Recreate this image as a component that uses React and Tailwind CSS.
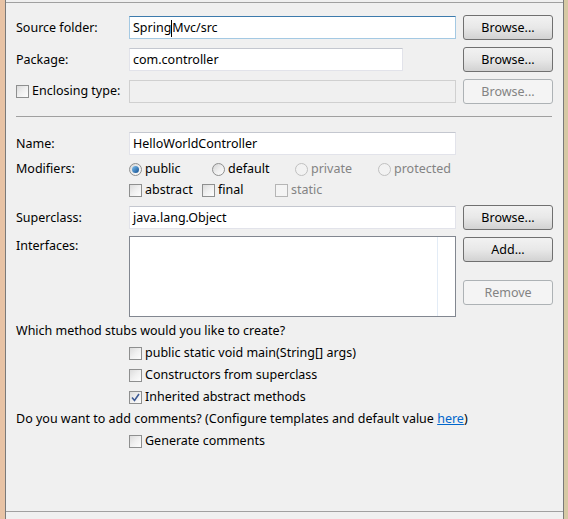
import React from 'react';

const font = { fontFamily: '"Noto Sans", "Liberation Sans", sans-serif' };

const Check = ({ checked, disabled }) => (
    <span
        className={`w-[13px] h-[13px] border flex items-center justify-center shrink-0 ${
            disabled
                ? 'border-[#b5b5b5] bg-[#f4f4f4]'
                : 'border-[#8e8f8f] bg-gradient-to-br from-[#dcdcdc] via-[#f0f0f0] to-[#fdfdfd]'
        }`}
    >
        {checked && (
            <svg width="9" height="9" viewBox="0 0 9 9">
                <path d="M1 4.5 L3.5 7.5 L8 1" fill="none" stroke="#3d5a94" strokeWidth="1.6" />
            </svg>
        )}
    </span>
);

const Radio = ({ checked, disabled }) => (
    <span
        className={`w-[13px] h-[13px] rounded-full border flex items-center justify-center shrink-0 ${
            disabled
                ? 'border-[#c0c0c0] bg-[#f2f2f2]'
                : 'border-[#8e8f8f] bg-gradient-to-br from-[#d4d4d4] via-[#eeeeee] to-[#fcfcfc]'
        }`}
    >
        {checked && <span className="w-[7px] h-[7px] rounded-full bg-gradient-to-br from-[#7fc3f2] to-[#0d4d8f]" />}
    </span>
);

const Button = ({ children, disabled }) => (
    <div
        className={`w-[90px] h-[25px] pt-px rounded-[3px] border flex items-center justify-center text-[12.5px] ${
            disabled
                ? 'border-[#adb2b5] bg-[#f4f4f4] text-[#838383]'
                : 'border-[#707070] bg-gradient-to-b from-[#f2f2f2] via-[#e8e8e8] to-[#d2d2d2] text-black'
        }`}
    >
        {children}
    </div>
);

const Field = ({ children, width = 'w-[327px]', focused, disabled }) => (
    <div
        className={`${width} h-[23px] pt-px border flex items-center pl-[3px] text-[12.5px] ${
            focused
                ? 'border-[#a4c9e3] border-t-[#3d7bad] bg-white'
                : disabled
                ? 'border-[#d0d0d0] bg-[#f0f0f0]'
                : 'border-[#e2e3ea] border-t-[#c4c7cf] bg-white'
        }`}
    >
        {children}
    </div>
);

const Row = ({ label, children, className = '' }) => (
    <div className={`flex items-center h-[25px] pl-[10px] ${className}`}>
        <div className="w-[113px] shrink-0 pt-px">{label}</div>
        {children}
    </div>
);

const Opt = ({ children, className = '' }) => (
    <div className={`flex items-center gap-[3px] ${className}`}>{children}</div>
);

export default function App() {
    return (
        <div className="w-[568px] h-[519px] flex text-black bg-[#f0f0f0]" style={font}>
            <div className="w-[5px] bg-[#e8c3a5]" />
            <div className="flex-1 flex flex-col border-l border-r border-[#7a7a7a]">
                <div className="h-[2px] bg-[#f0f0f0]" />
                <div className="flex-1 flex flex-col border-t border-[#a0a0a0] text-[12.5px]">
                    <Row label="Source folder:" className="mt-[12px]">
                        <Field focused>
                            Spring<span className="inline-block w-px h-[17px] bg-black" />Mvc/src
                        </Field>
                        <div className="ml-[7px]"><Button>Browse...</Button></div>
                    </Row>
                    <Row label="Package:" className="mt-[7px]">
                        <div className="w-[334px]"><Field width="w-[274px]">com.controller</Field></div>
                        <Button>Browse...</Button>
                    </Row>
                    <div className="flex items-center h-[25px] pl-[10px] mt-[7px]">
                        <Opt className="w-[113px] shrink-0">
                            <Check />
                            <span>Enclosing type:</span>
                        </Opt>
                        <Field disabled />
                        <div className="ml-[7px]"><Button disabled>Browse...</Button></div>
                    </div>
                    <div className="mt-[12px] ml-[10px] w-[536px] h-px bg-[#a0a0a0]" />
                    <Row label="Name:" className="mt-[14px]">
                        <Field>HelloWorldController</Field>
                    </Row>
                    <div className="flex items-center h-[20px] pl-[10px] mt-[3px]">
                        <div className="w-[113px] shrink-0">Modifiers:</div>
                        <Opt className="w-[83px]"><Radio checked /><span>public</span></Opt>
                        <Opt className="w-[83px]"><Radio /><span>default</span></Opt>
                        <Opt className="w-[83px] text-[#838383]"><Radio disabled /><span>private</span></Opt>
                        <Opt className="text-[#838383]"><Radio disabled /><span>protected</span></Opt>
                    </div>
                    <div className="flex items-center h-[20px] pl-[123px] mt-[1px]">
                        <Opt className="w-[73px]"><Check /><span>abstract</span></Opt>
                        <Opt className="w-[73px]"><Check /><span>final</span></Opt>
                        <Opt className="text-[#838383]"><Check disabled /><span>static</span></Opt>
                    </div>
                    <Row label="Superclass:" className="mt-[5px]">
                        <Field>java.lang.Object</Field>
                        <div className="ml-[7px]"><Button>Browse...</Button></div>
                    </Row>
                    <div className="flex pl-[10px] mt-[6px]">
                        <div className="w-[113px] shrink-0 pt-[1px]">Interfaces:</div>
                        <div className="w-[327px] h-[81px] border border-[#828790] bg-white flex justify-end">
                            <div className="w-[18px] border-l border-[#e3ecf6]" />
                        </div>
                        <div className="ml-[7px] flex flex-col pt-[1px] gap-[18px]">
                            <Button>Add...</Button>
                            <Button disabled>Remove</Button>
                        </div>
                    </div>
                    <div className="mt-[3px] pl-[10px] h-[22px] flex items-center">
                        Which method stubs would you like to create?
                    </div>
                    <div className="pl-[123px] flex flex-col">
                        <Opt className="h-[22px]"><Check /><span>public static void main(String[] args)</span></Opt>
                        <Opt className="h-[22px]"><Check /><span>Constructors from superclass</span></Opt>
                        <Opt className="h-[22px]"><Check checked /><span>Inherited abstract methods</span></Opt>
                    </div>
                    <div className="pl-[10px] h-[22px] flex items-center">
                        <span>
                            Do you want to add comments? (Configure templates and default value{' '}
                            <span className="text-[#0066cc] underline">here</span>)
                        </span>
                    </div>
                    <div className="pl-[123px]">
                        <Opt className="h-[22px]"><Check /><span>Generate comments</span></Opt>
                    </div>
                    <div className="flex-1" />
                    <div className="h-[8px] border-t border-[#a0a0a0]" />
                </div>
            </div>
            <div className="w-[4px] bg-[#d6c9a4]" />
        </div>
    );
}
